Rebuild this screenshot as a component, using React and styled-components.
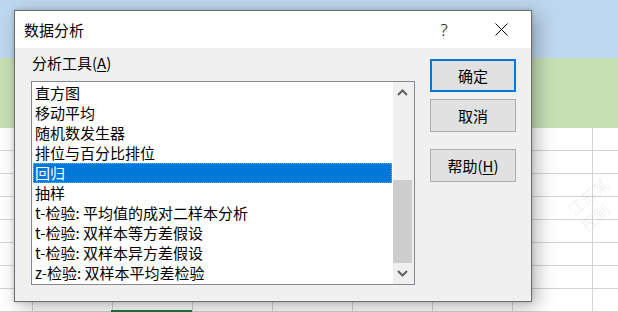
import React from "react";
import styled, { createGlobalStyle } from "styled-components";

const GlobalStyle = createGlobalStyle`
  html, body {
    margin: 0;
    padding: 0;
    background: #fff;
  }
  body {
    font-family: "Noto Sans CJK SC", "Noto Sans", sans-serif;
    color: #000;
  }
`;

const Frame = styled.div`
  position: relative;
  width: 618px;
  height: 312px;
  overflow: hidden;
  background: #fff;
`;

const Sheet = styled.div`
  display: flex;
  flex-direction: column;
  width: 100%;
  height: 100%;
`;

const Band = styled.div`
  height: ${props => props.h}px;
  background: ${props => props.color};
  flex-shrink: 0;
`;

const GridRow = styled.div`
  display: grid;
  grid-template-columns: 32px repeat(8, 80px);
  height: 23px;
  flex-shrink: 0;
`;

const Cell = styled.div`
  position: relative;
  box-sizing: border-box;
  border-bottom: 1px solid #d4d4d4;
  border-left: ${props => (props.first ? "none" : "1px solid #d4d4d4")};

  ${props =>
    props.active &&
    `
    &::after {
      content: "";
      position: absolute;
      left: -2px;
      right: -1px;
      bottom: -1px;
      height: 2px;
      background: #217346;
    }
  `}
`;

const Watermark = styled.div`
  position: absolute;
  left: 563px;
  top: 204px;
  transform: rotate(-40deg);
  transform-origin: left top;
  font-size: 16px;
  line-height: 20px;
  color: rgba(0, 0, 0, 0.07);
  white-space: nowrap;
  pointer-events: none;
`;

const Dialog = styled.div`
  position: absolute;
  left: 14px;
  top: 10px;
  width: 518px;
  height: 292px;
  box-sizing: border-box;
  border: 1px solid #6e6e6e;
  background: #f0f0f0;
  box-shadow: 5px 5px 18px rgba(0, 0, 0, 0.28), 0 0 4px rgba(0, 0, 0, 0.18);
  font-size: 15px;
`;

const TitleBar = styled.div`
  display: flex;
  align-items: center;
  height: 37px;
  background: #fff;
  padding-left: 9px;
  padding-right: 7px;
`;

const Title = styled.div`
  flex: 1;
  font-size: 15px;
  line-height: 20px;
`;

const TitleButton = styled.div`
  width: 46px;
  height: 37px;
  display: flex;
  align-items: center;
  justify-content: center;
  font-family: "Noto Sans", sans-serif;
  font-weight: 300;
  font-size: 17px;
  margin-left: ${props => props.gap || 0}px;
`;

const Body = styled.div`
  display: grid;
  grid-template-columns: 384px 86px;
  column-gap: 15px;
  padding: 0 15px 0 16px;
`;

const LeftCol = styled.div`
  display: flex;
  flex-direction: column;
  padding-top: 5px;
`;

const Label = styled.div`
  line-height: 20px;
  padding-left: 1px;
  margin-bottom: 8px;

  u {
    text-decoration-thickness: 1px;
    text-underline-offset: 2px;
  }
`;

const ListBox = styled.div`
  display: flex;
  height: 204px;
  box-sizing: border-box;
  border: 1px solid #828790;
  background: #fff;
`;

const Items = styled.div`
  flex: 1;
  padding: 1px;
  overflow: hidden;
`;

const Item = styled.div`
  height: 20px;
  line-height: 20px;
  padding-left: 2px;
  white-space: nowrap;
  box-sizing: border-box;
  background: ${props => (props.selected ? "#0078d7" : "transparent")};
  color: ${props => (props.selected ? "#fff" : "#000")};
  outline: ${props => (props.selected ? "1px dotted #e8953a" : "none")};
  outline-offset: -1px;
`;

const ScrollBar = styled.div`
  width: 21px;
  display: flex;
  flex-direction: column;
  background: #f0f0f0;
`;

const ArrowButton = styled.div`
  height: ${props => props.h}px;
  display: flex;
  align-items: center;
  justify-content: center;
  padding-right: 2px;
`;

const Track = styled.div`
  flex: 1;
  display: flex;
  flex-direction: column;
  justify-content: flex-end;
`;

const Thumb = styled.div`
  height: 83px;
  margin-right: 2px;
  background: #cdcdcd;
`;

const RightCol = styled.div`
  display: flex;
  flex-direction: column;
  padding-top: 11px;
`;

const Button = styled.div`
  height: 33px;
  box-sizing: border-box;
  margin-top: ${props => props.mt || 0}px;
  border: ${props => (props.primary ? "2px solid #0078d7" : "1px solid #adadad")};
  background: #e1e1e1;
  display: flex;
  align-items: center;
  justify-content: center;
  line-height: 20px;

  u {
    text-decoration-thickness: 1px;
    text-underline-offset: 2px;
  }
`;

const tools = [
  "直方图",
  "移动平均",
  "随机数发生器",
  "排位与百分比排位",
  "回归",
  "抽样",
  "t-检验: 平均值的成对二样本分析",
  "t-检验: 双样本等方差假设",
  "t-检验: 双样本异方差假设",
  "z-检验: 双样本平均差检验",
];

const Chevron = ({ up }) => (
  <svg width="11" height="7" viewBox="0 0 11 7">
    <path
      d={up ? "M1 6 L5.5 1.5 L10 6" : "M1 1 L5.5 5.5 L10 1"}
      fill="none"
      stroke="#606060"
      strokeWidth="2"
    />
  </svg>
);

const CloseIcon = () => (
  <svg width="13" height="13" viewBox="0 0 13 13">
    <path d="M0.5 0.5 L12.5 12.5 M12.5 0.5 L0.5 12.5" stroke="#000" strokeWidth="1" />
  </svg>
);

const App = () => (
  <Frame>
    <GlobalStyle />
    <Sheet>
      <Band h={58} color="#bdd7ee" />
      <Band h={70} color="#c6e0b4" />
      {Array.from({ length: 8 }).map((_, r) => (
        <GridRow key={r}>
          {Array.from({ length: 9 }).map((_, c) => (
            <Cell key={c} first={c === 0} active={r === 7 && c === 2} />
          ))}
        </GridRow>
      ))}
    </Sheet>

    <Watermark>
      <div>江苏某</div>
      <div>控制</div>
    </Watermark>

    <Dialog>
      <TitleBar>
        <Title>数据分析</Title>
        <TitleButton>?</TitleButton>
        <TitleButton gap={11}>
          <CloseIcon />
        </TitleButton>
      </TitleBar>
      <Body>
        <LeftCol>
          <Label>
            分析工具(<u>A</u>)
          </Label>
          <ListBox>
            <Items>
              {tools.map(t => (
                <Item key={t} selected={t === "回归"}>
                  {t}
                </Item>
              ))}
            </Items>
            <ScrollBar>
              <ArrowButton h={21}>
                <Chevron up />
              </ArrowButton>
              <Track>
                <Thumb />
              </Track>
              <ArrowButton h={21}>
                <Chevron />
              </ArrowButton>
            </ScrollBar>
          </ListBox>
        </LeftCol>
        <RightCol>
          <Button primary>确定</Button>
          <Button mt={7}>取消</Button>
          <Button mt={17}>
            帮助(<u>H</u>)
          </Button>
        </RightCol>
      </Body>
    </Dialog>
  </Frame>
);

export default App;
